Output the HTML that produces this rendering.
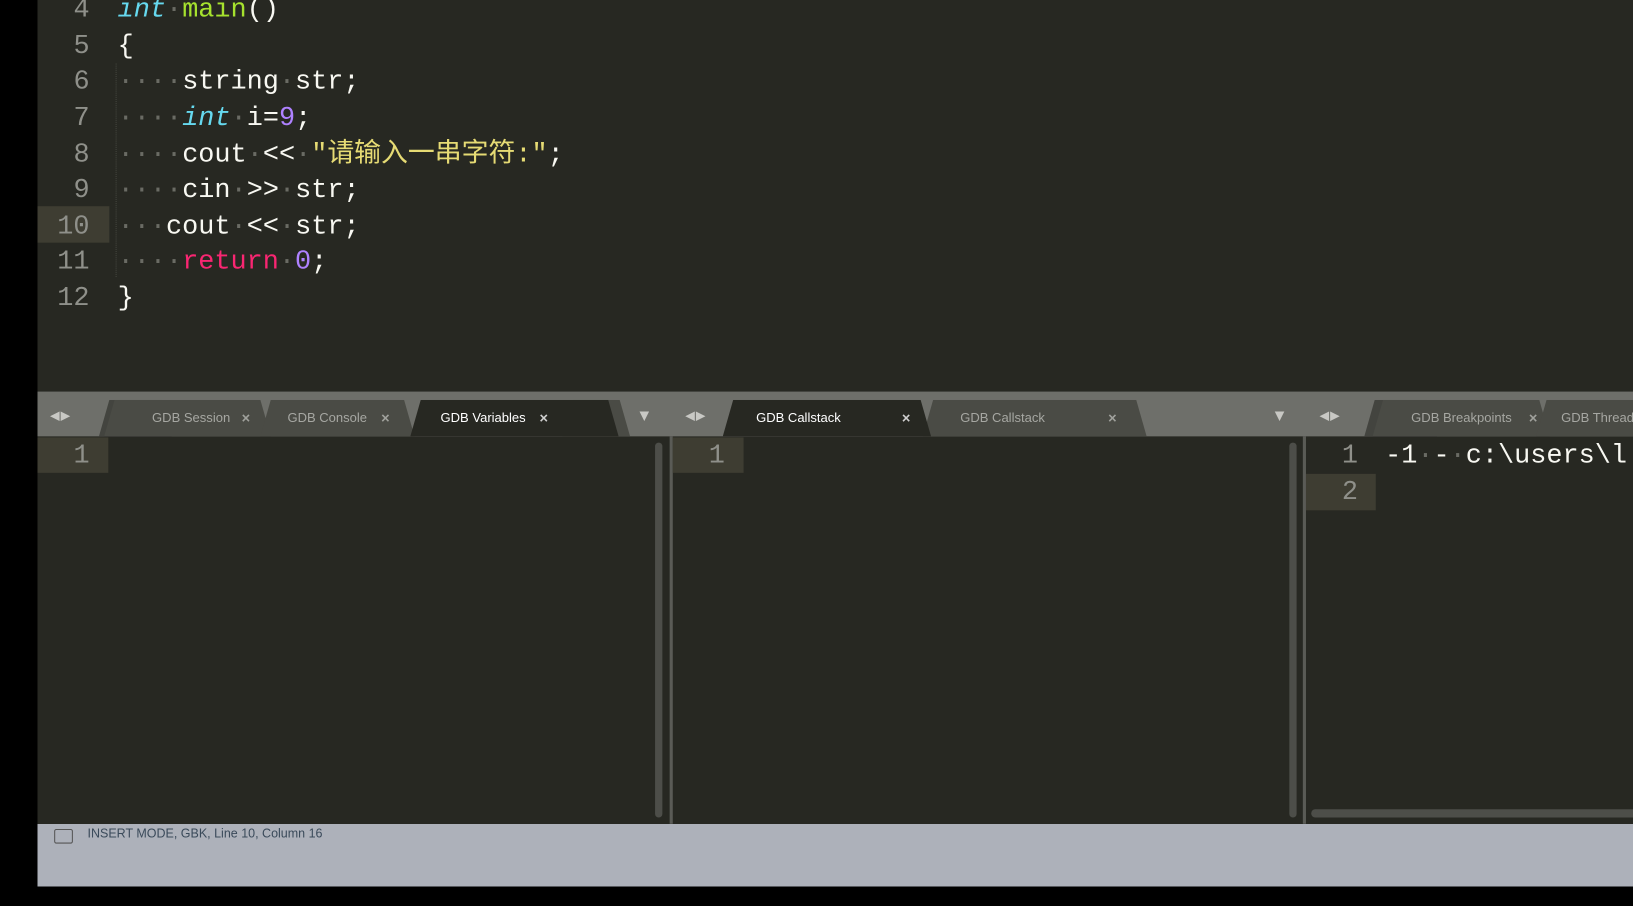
<!DOCTYPE html>
<html><head><meta charset="utf-8"><style>
html,body{margin:0;padding:0;width:1633px;height:841px;overflow:hidden;background:#000;}
#w{position:absolute;left:0;top:0;width:1568px;height:808px;transform:scale(1.04145);transform-origin:0 0;background:#272822;font-family:"Liberation Mono","Noto Sans CJK SC",monospace;}
.abs{position:absolute;}
.code{position:absolute;left:113px;font-size:25.8px;color:#f8f8f2;white-space:pre;line-height:34.6px;height:34.6px;}
.ln{position:absolute;left:36px;width:50px;text-align:right;font-size:25.8px;color:#8f908a;line-height:34.6px;}
.d{color:#6a6b64;}
.kw{color:#66d9ef;font-style:italic;}
.fn{color:#a6e22e;}
.st{color:#e6db74;}
.nm{color:#ae81ff;}
.rt{color:#f92672;}
.tab{position:absolute;top:384px;height:35px;background:#4a4b45;clip-path:polygon(10px 0,calc(100% - 10px) 0,100% 100%,0 100%);font-family:"Liberation Sans",sans-serif;font-size:12.5px;color:#a6a7a2;line-height:35px;border-radius:4px 4px 0 0;}
.tab.a{background:#272822;color:#fff;}
.tab span{position:absolute;}
.x{font-size:14px;font-weight:bold;color:#a0a19c;}
.a .x{color:#d0d0d0;}
.arr{position:absolute;top:384px;color:#c8c8c4;font-size:12px;line-height:30px;font-family:"DejaVu Sans",sans-serif;letter-spacing:1px;}
.sb{position:absolute;background:#4d4e49;border-radius:4px;}
</style></head><body><div id="w">
<div class="abs" style="left:0;top:0;width:36px;height:870px;background:#000"></div>
<div class="abs" style="left:36px;top:198px;width:69px;height:35px;background:#3e3d32"></div>
<div class="abs" style="left:111px;top:61px;height:205px;border-left:1px dotted #45463f"></div>

<div class="ln" style="top:-7px">4</div>
<div class="ln" style="top:28px">5</div>
<div class="ln" style="top:62px">6</div>
<div class="ln" style="top:97px">7</div>
<div class="ln" style="top:132px">8</div>
<div class="ln" style="top:166px">9</div>
<div class="ln" style="top:201px">10</div>
<div class="ln" style="top:235px">11</div>
<div class="ln" style="top:270px">12</div>

<div class="code" style="top:-7px"><span class="kw">int</span><span class="d">·</span><span class="fn">main</span>()</div>
<div class="code" style="top:28px">{</div>
<div class="code" style="top:62px"><span class="d">····</span>string<span class="d">·</span>str;</div>
<div class="code" style="top:97px"><span class="d">····</span><span class="kw">int</span><span class="d">·</span>i=<span class="nm">9</span>;</div>
<div class="code" style="top:132px"><span class="d">····</span>cout<span class="d">·</span>&lt;&lt;<span class="d">·</span><span class="st">"请输入一串字符:"</span>;</div>
<div class="code" style="top:166px"><span class="d">····</span>cin<span class="d">·</span>&gt;&gt;<span class="d">·</span>str;</div>
<div class="code" style="top:201px"><span class="d">···</span>cout<span class="d">·</span>&lt;&lt;<span class="d">·</span>str;</div>
<div class="code" style="top:235px"><span class="d">····</span><span class="rt">return</span><span class="d">·</span><span class="nm">0</span>;</div>
<div class="code" style="top:270px">}</div>

<div class="abs" style="left:36px;top:376px;width:1532px;height:43px;background:#6e6f6a"></div>
<div class="arr" style="left:48px">◀▶</div>
<div class="tab" style="left:95px;width:70px;background:#43443f"></div>
<div class="tab" style="left:100px;width:160px"><span style="left:46px">GDB Session</span><span class="x" style="left:132px">×</span></div>
<div class="tab" style="left:250px;width:148px"><span style="left:26px">GDB Console</span><span class="x" style="left:116px">×</span></div>
<div class="tab" style="left:540px;width:65px;background:#4a4b45"><span class="x" style="left:13px">×</span></div>
<div class="tab a" style="left:394px;width:200px"><span style="left:29px">GDB Variables</span><span class="x" style="left:124px">×</span></div>
<div class="arr" style="left:614px">▼</div>
<div class="arr" style="left:658px">◀▶</div>
<div class="tab" style="left:886px;width:215px"><span style="left:36px">GDB Callstack</span><span class="x" style="left:178px">×</span></div>
<div class="tab a" style="left:694px;width:200px"><span style="left:32px">GDB Callstack</span><span class="x" style="left:172px">×</span></div>
<div class="arr" style="left:1224px">▼</div>
<div class="arr" style="left:1267px">◀▶</div>
<div class="tab" style="left:1310px;width:70px;background:#43443f"></div>
<div class="tab" style="left:1318px;width:170px"><span style="left:37px">GDB Breakpoints</span><span class="x" style="left:150px">×</span></div>
<div class="tab" style="left:1475px;width:120px"><span style="left:24px">GDB Threads</span></div>

<div class="abs" style="left:643px;top:419px;width:3px;height:372px;background:#5a5b56"></div>
<div class="abs" style="left:1251px;top:419px;width:3px;height:372px;background:#5a5b56"></div>
<div class="abs" style="left:36px;top:420px;width:68px;height:34px;background:#3e3d32"></div>
<div class="abs" style="left:646px;top:420px;width:68px;height:34px;background:#3e3d32"></div>
<div class="abs" style="left:1254px;top:455px;width:67px;height:35px;background:#3e3d32"></div>
<div class="ln" style="top:421px;left:36px;width:50px">1</div>
<div class="ln" style="top:421px;left:646px;width:50px">1</div>
<div class="ln" style="top:421px;left:1254px;width:50px">1</div>
<div class="ln" style="top:456px;left:1254px;width:50px">2</div>
<div class="code" style="top:421px;left:1330px">-1<span class="d">·</span>-<span class="d">·</span>c:\users\l</div>
<div class="sb" style="left:629px;top:425px;width:7px;height:360px"></div>
<div class="sb" style="left:1238px;top:425px;width:7px;height:360px"></div>
<div class="sb" style="left:1259px;top:777px;width:320px;height:8px"></div>

<div class="abs" style="left:36px;top:791px;width:1532px;height:60px;background:#adb1ba"></div>
<div class="abs" style="left:52px;top:796px;width:16px;height:12px;border:1px solid #555;border-radius:2px"></div>
<div class="abs" style="left:84px;top:793px;font-family:'Liberation Sans',sans-serif;font-size:12px;color:#3a4a5a">INSERT MODE, GBK, Line 10, Column 16</div>
</div></body></html>
